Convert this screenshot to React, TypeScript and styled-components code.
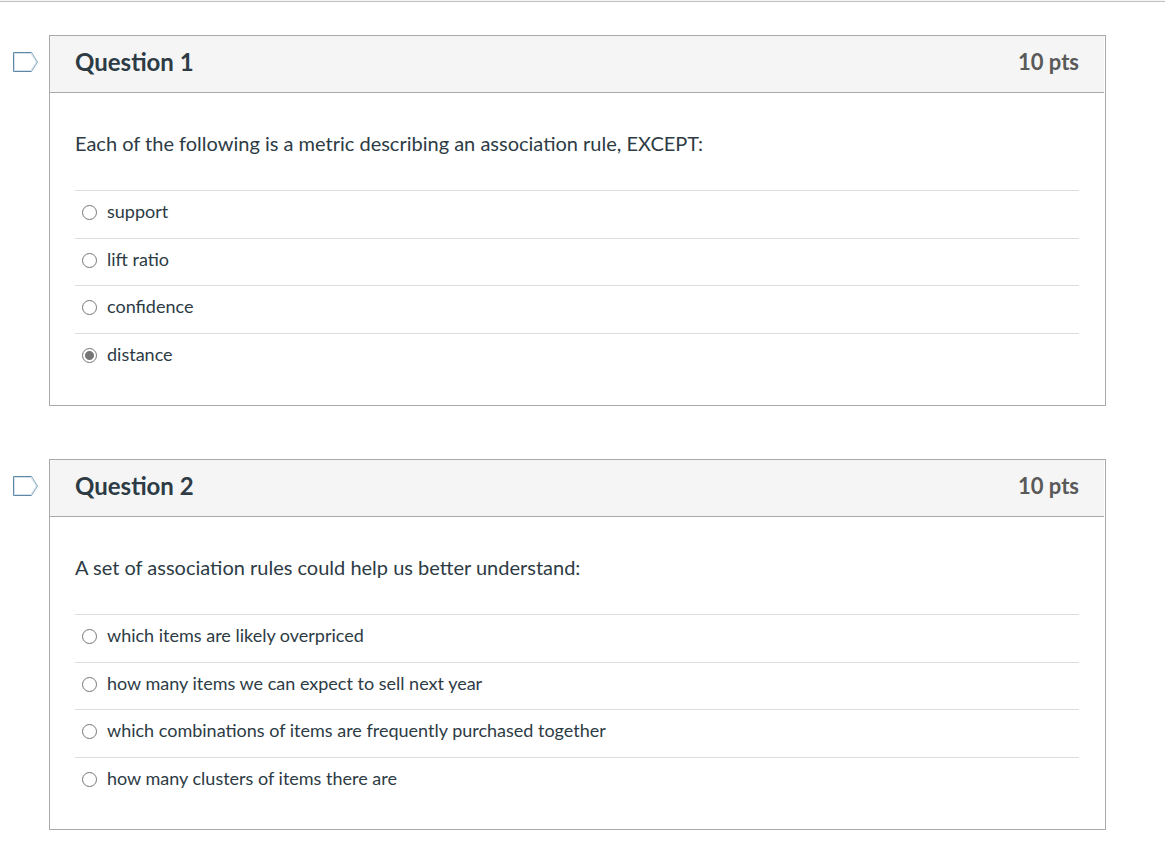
import React, { useState } from "react";
import styled, { createGlobalStyle } from "styled-components";

const GlobalStyle = createGlobalStyle`
  *, *::before, *::after { box-sizing: border-box; }
  body {
    margin: 0;
    background: #fff;
    color: #2d3b45;
    font-family: Lato, "Liberation Sans", sans-serif;
    font-size: 20px;
    line-height: 30px;
  }
`;

const Page = styled.main`
  border-top: 1px solid #f5f5f5;
`;

const QuizForm = styled.form`
  display: flex;
  flex-direction: column;
  gap: 53px;
  padding: 33px 59px 37px 12px;
  border-top: 1px solid #c0c0c0;
`;

const QuestionRow = styled.section`
  display: flex;
  align-items: flex-start;
  gap: 10px;
`;

const FlagButton = styled.button`
  flex: none;
  width: 27px;
  height: 22px;
  margin: 16px 0 0;
  padding: 0;
  border: 0;
  background: none;
  cursor: pointer;

  svg { display: block; }
`;

const Card = styled.div`
  flex: 1;
  min-width: 0;
  border: 1px solid #aaa;
`;

const CardHeader = styled.header`
  display: flex;
  align-items: center;
  justify-content: space-between;
  margin-right: 1px;
  padding: 11px 25px 15px;
  border-bottom: 1px solid #aaa;
  background: #f5f5f5;
`;

const Title = styled.h2`
  margin: 0;
  font-size: 24px;
  font-weight: 700;
  line-height: 30px;
`;

const Points = styled.span`
  color: #595959;
  font-size: 22px;
  font-weight: 700;
  line-height: 30px;
`;

const CardBody = styled.div`
  padding: 35px 26px 25px 25px;
`;

const Prompt = styled.p`
  margin: 0 0 32px;
`;

const Answers = styled.div`
  display: flex;
  flex-direction: column;
  min-height: 190px;
`;

const Answer = styled.label`
  display: flex;
  flex: 1 0 auto;
  align-items: flex-start;
  gap: 10px;
  padding: 5px 7px 10px;
  border-top: 1px solid #ddd;
  font-size: 18px;
  cursor: pointer;
`;

const Radio = styled.input`
  flex: none;
  appearance: none;
  width: 15px;
  height: 15px;
  margin: 9px 0 0;
  border: 1px solid #767676;
  border-radius: 50%;
  background: #fff;

  &:checked {
    background: radial-gradient(circle, #767676 4px, #fff 5px);
  }
`;

type Question = { title: string; points: number; prompt: string; answers: string[]; selected?: number };

const questions: Question[] = [
  {
    title: "Question 1",
    points: 10,
    prompt: "Each of the following is a metric describing an association rule, EXCEPT:",
    answers: ["support", "lift ratio", "confidence", "distance"],
    selected: 3,
  },
  {
    title: "Question 2",
    points: 10,
    prompt: "A set of association rules could help us better understand:",
    answers: [
      "which items are likely overpriced",
      "how many items we can expect to sell next year",
      "which combinations of items are frequently purchased together",
      "how many clusters of items there are",
    ],
  },
];

function QuestionItem({ question, name }: { question: Question; name: string }) {
  const [selected, setSelected] = useState(question.selected);
  const [flagged, setFlagged] = useState(false);

  return (
    <QuestionRow aria-labelledby={`${name}-title`}>
      <FlagButton
        type="button"
        aria-label={`Flag ${question.title}`}
        aria-pressed={flagged}
        onClick={() => setFlagged(!flagged)}
      >
        <svg width="27" height="22" viewBox="0 0 27 22" fill={flagged ? "#fcd35b" : "#fff"}>
          <path d="M2.5 2.5H18.8L24.4 11L18.8 19.5H2.5Z" stroke="#d5e2eb" />
          <path d="M19.5 1.5L25.5 11L19.5 20.5" fill="none" stroke="#86a7be" />
          <path d="M19.5 1.5H1.5V20.5H19.5" fill="none" stroke="#5c87a5" />
        </svg>
      </FlagButton>
      <Card>
        <CardHeader>
          <Title id={`${name}-title`}>{question.title}</Title>
          <Points>{question.points} pts</Points>
        </CardHeader>
        <CardBody>
          <Prompt id={`${name}-prompt`}>{question.prompt}</Prompt>
          <Answers role="radiogroup" aria-labelledby={`${name}-prompt`}>
            {question.answers.map((answer, index) => (
              <Answer key={answer} htmlFor={`${name}-${index}`}>
                <Radio
                  type="radio"
                  id={`${name}-${index}`}
                  name={name}
                  checked={selected === index}
                  onChange={() => setSelected(index)}
                />
                {answer}
              </Answer>
            ))}
          </Answers>
        </CardBody>
      </Card>
    </QuestionRow>
  );
}

export default function App() {
  return (
    <>
      <GlobalStyle />
      <Page>
        <QuizForm>
          {questions.map((question, index) => (
            <QuestionItem key={question.title} question={question} name={`question-${index + 1}`} />
          ))}
        </QuizForm>
      </Page>
    </>
  );
}
